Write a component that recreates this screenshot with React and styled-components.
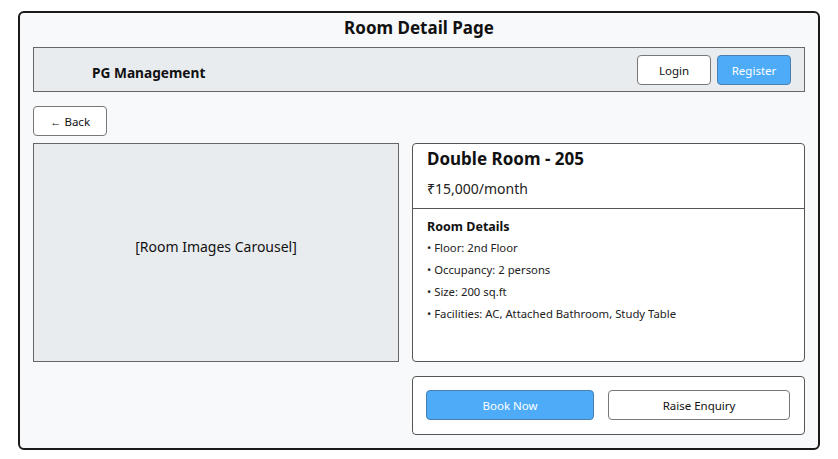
import React from 'react';
import styled, { createGlobalStyle } from 'styled-components';

const GlobalStyle = createGlobalStyle`
  * { box-sizing: border-box; }
  body {
    margin: 0;
    background: #ffffff;
    font-family: 'Noto Sans', 'Open Sans', sans-serif;
    color: #111;
  }
`;

const details = [
  'Floor: 2nd Floor',
  'Occupancy: 2 persons',
  'Size: 200 sq.ft',
  'Facilities: AC, Attached Bathroom, Study Table',
];

const App = () => {
  return (
    <>
      <GlobalStyle />
      <Page>
        <Frame>
          <Title>Room Detail Page</Title>
          <Navbar>
            <Brand>PG Management</Brand>
            <NavActions>
              <Button>Login</Button>
              <Button primary>Register</Button>
            </NavActions>
          </Navbar>
          <BackRow>
            <Button>← Back</Button>
          </BackRow>
          <Main>
            <Carousel>[Room Images Carousel]</Carousel>
            <Side>
              <InfoCard>
                <InfoHeader>
                  <RoomName>Double Room - 205</RoomName>
                  <Price>₹15,000/month</Price>
                </InfoHeader>
                <InfoBody>
                  <SectionTitle>Room Details</SectionTitle>
                  {details.map((d) => (
                    <DetailItem key={d}>• {d}</DetailItem>
                  ))}
                </InfoBody>
              </InfoCard>
              <ActionCard>
                <WideButton primary grow={168}>Book Now</WideButton>
                <WideButton grow={182}>Raise Enquiry</WideButton>
              </ActionCard>
            </Side>
          </Main>
        </Frame>
      </Page>
    </>
  );
};

export default App;

const Page = styled.div`
  width: 838px;
  height: 459px;
  padding: 11px 18px 9px 18px;
`;

const Frame = styled.div`
  width: 802px;
  height: 439px;
  border: 2px solid #1a1a1a;
  border-radius: 6px;
  background: #f8f9fa;
  padding: 4px 13px 12px 13px;
  display: flex;
  flex-direction: column;
`;

const Title = styled.h1`
  margin: 0;
  height: 22px;
  line-height: 22px;
  font-size: 17px;
  font-weight: 700;
  text-align: center;
  color: #111;
`;

const Navbar = styled.div`
  margin-top: 8px;
  height: 45px;
  background: #e9ecef;
  border: 1px solid #666;
  display: flex;
  align-items: center;
  justify-content: space-between;
  padding: 5px 13px 0 58px;
`;

const Brand = styled.div`
  font-size: 13.7px;
  font-weight: 700;
  color: #111;
`;

const NavActions = styled.div`
  display: flex;
  gap: 6px;
  margin-top: -4px;
`;

const Button = styled.button`
  width: 74px;
  height: 30px;
  border-radius: 4px;
  border: 1px solid ${({ primary }) => (primary ? '#4a7fb0' : '#777')};
  background: ${({ primary }) => (primary ? '#4dabf7' : '#ffffff')};
  color: ${({ primary }) => (primary ? '#ffffff' : '#111')};
  font-family: inherit;
  font-size: 11.5px;
  padding: 0;
  cursor: pointer;
`;

const BackRow = styled.div`
  margin-top: 14px;
  display: flex;
`;

const Main = styled.div`
  margin-top: 7px;
  display: grid;
  grid-template-columns: 366px 1fr;
  gap: 13px;
`;

const Carousel = styled.div`
  height: 219px;
  background: #e9ecef;
  border: 1px solid #666;
  display: flex;
  align-items: center;
  justify-content: center;
  padding-bottom: 12px;
  font-size: 14px;
  color: #111;
`;

const Side = styled.div`
  display: flex;
  flex-direction: column;
  gap: 14px;
`;

const InfoCard = styled.div`
  height: 219px;
  background: #fff;
  border: 1px solid #555;
  border-radius: 4px;
`;

const InfoHeader = styled.div`
  padding: 4px 14px 10px;
  border-bottom: 1px solid #555;
`;

const RoomName = styled.h2`
  margin: 0;
  font-size: 17px;
  line-height: 22px;
  font-weight: 700;
  color: #111;
`;

const Price = styled.div`
  margin-top: 10px;
  font-size: 14px;
  line-height: 18px;
  color: #222;
`;

const InfoBody = styled.div`
  padding: 10px 14px 0;
`;

const SectionTitle = styled.h3`
  margin: 0 0 2px;
  font-size: 12.5px;
  line-height: 16px;
  font-weight: 700;
  color: #111;
`;

const DetailItem = styled.div`
  font-size: 11.3px;
  line-height: 22px;
  color: #222;
`;

const ActionCard = styled.div`
  height: 59px;
  background: #fff;
  border: 1px solid #555;
  border-radius: 4px;
  display: flex;
  align-items: flex-start;
  gap: 14px;
  padding: 13px 14px 0 13px;
`;

const WideButton = styled(Button)`
  width: auto;
  flex: ${({ grow }) => grow} 1 0;
`;
